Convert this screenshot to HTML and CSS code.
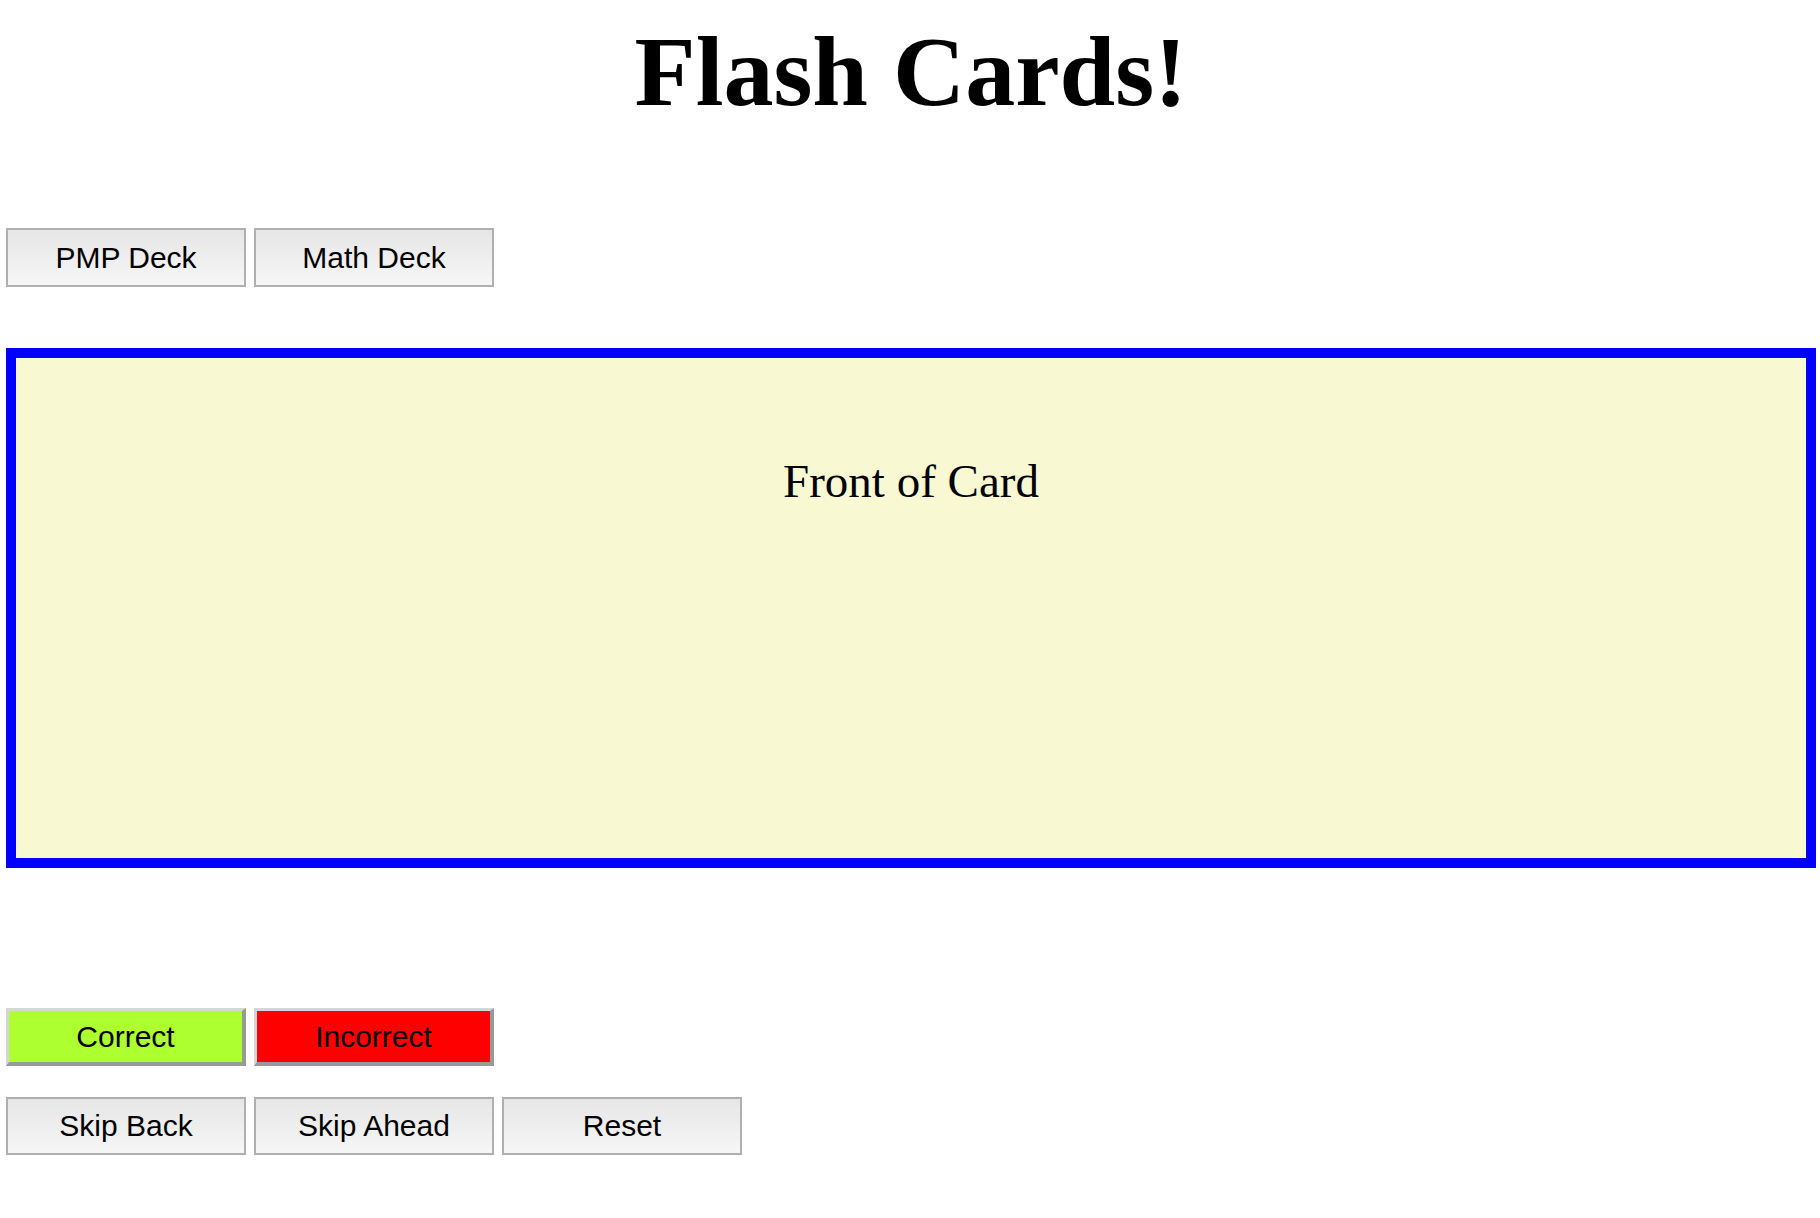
FILE: index.html
```html
<!DOCTYPE html>
<html>
<head>
<meta charset="utf-8">
<title>Flash Cards</title>
<link rel="stylesheet" href="styles.css">
</head>
<body>
<h1 class="title">Flash Cards!</h1>
<div class="row deck-row">
  <button class="btn">PMP Deck</button>
  <button class="btn">Math Deck</button>
</div>
<div class="card">
  <div class="card-text">Front of Card</div>
</div>
<div class="row answer-row">
  <button class="btn btn-correct">Correct</button>
  <button class="btn btn-incorrect">Incorrect</button>
</div>
<div class="row nav-row">
  <button class="btn">Skip Back</button>
  <button class="btn">Skip Ahead</button>
  <button class="btn">Reset</button>
</div>
</body>
</html>
```
FILE: styles.css
```css
html, body {
  background: #ffffff;
}
body {
  margin: 0;
  padding: 0 4px 0 6px;
  font-family: "Liberation Serif", "Times New Roman", serif;
  color: #000;
}
.title {
  margin: 14px 0 0;
  font-family: "Liberation Serif", "Times New Roman", serif;
  font-weight: bold;
  font-size: 100px;
  line-height: 115px;
  text-align: center;
}
.row {
  display: flex;
  gap: 8px;
}
.deck-row {
  margin-top: 99px;
}
.btn {
  box-sizing: border-box;
  width: 240px;
  height: 59px;
  margin: 0;
  padding: 0;
  border: 2px solid #b0b0b0;
  background: linear-gradient(#e6e6e6, #f6f6f6);
  font-family: "Liberation Sans", Arial, sans-serif;
  font-size: 30px;
  color: #000;
  text-align: center;
}
.card {
  box-sizing: border-box;
  margin-top: 61px;
  height: 520px;
  border: 10px solid #0000ff;
  background: #f8f8d3;
  padding-top: 97px;
}
.card-text {
  font-family: "Liberation Serif", "Times New Roman", serif;
  font-size: 47px;
  line-height: 53px;
  text-align: center;
}
.answer-row {
  margin-top: 140px;
}
.answer-row .btn {
  height: 58px;
  border-width: 3px 4px 4px 3px;
  border-style: solid;
  border-color: #d6d6d6 #999999 #999999 #d6d6d6;
}
.btn-correct {
  background: #adff2f;
}
.btn-incorrect {
  background: #ff0000;
}
.nav-row {
  margin-top: 31px;
}
.nav-row .btn {
  height: 58px;
}
```
